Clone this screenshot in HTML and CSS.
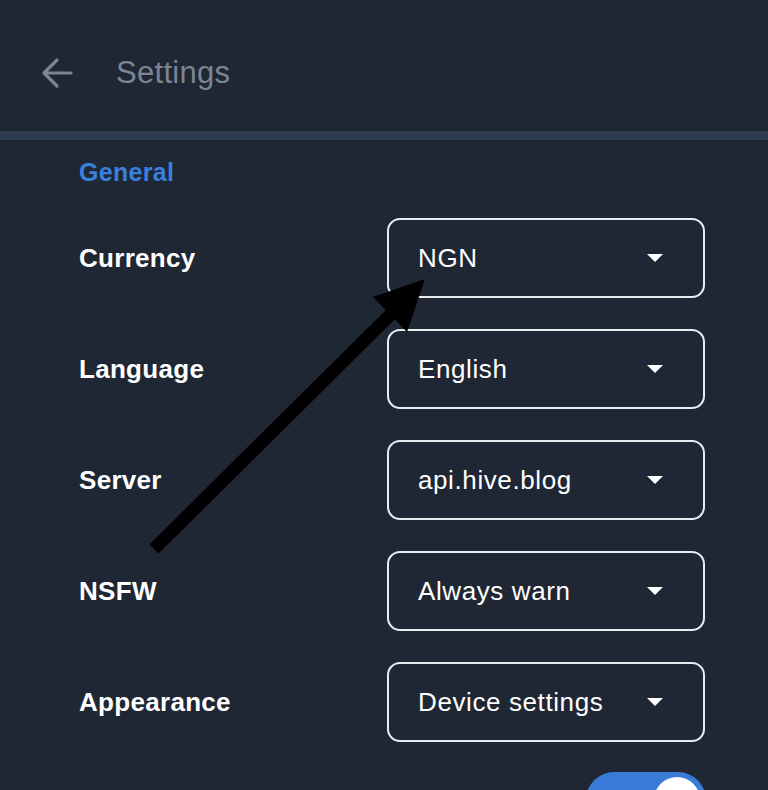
FILE: index.html
```html
<!DOCTYPE html>
<html lang="en">
<head>
    <meta charset="UTF-8">
    <meta name="viewport" content="width=device-width, initial-scale=1.0">
    <title>Settings</title>
    <link rel="stylesheet" href="styles.css">
</head>
<body>
    <header class="topbar">
        <svg class="back" width="34" height="34" viewBox="0 0 34 34">
            <path d="M31 17H4M17 4L4 17l13 13" fill="none" stroke="#7c8591" stroke-width="3.2" stroke-linecap="round" stroke-linejoin="round"/>
        </svg>
        <h1 class="title">Settings</h1>
    </header>
    <div class="divider"></div>

    <main class="content">
        <h2 class="section">General</h2>

        <div class="row">
            <span class="label">Currency</span>
            <div class="select"><span>NGN</span><i class="caret"></i></div>
        </div>
        <div class="row">
            <span class="label">Language</span>
            <div class="select"><span>English</span><i class="caret"></i></div>
        </div>
        <div class="row">
            <span class="label">Server</span>
            <div class="select"><span>api.hive.blog</span><i class="caret"></i></div>
        </div>
        <div class="row">
            <span class="label">NSFW</span>
            <div class="select"><span>Always warn</span><i class="caret"></i></div>
        </div>
        <div class="row">
            <span class="label">Appearance</span>
            <div class="select"><span>Device settings</span><i class="caret"></i></div>
        </div>
        <div class="row toggle-row">
            <span class="label"></span>
            <div class="toggle"><i class="knob"></i></div>
        </div>
    </main>

    <!-- annotation arrow drawn over the screenshot -->
    <svg class="pointer" width="768" height="790" viewBox="0 0 768 790">
        <line x1="154" y1="549" x2="392" y2="313" stroke="#000" stroke-width="13"/>
        <polygon points="425,279 373,297 407,332" fill="#000"/>
    </svg>
</body>
</html>
```

FILE: styles.css
```css
body {
    margin: 0;
    background: #1f2734;
    font-family: "Liberation Sans", Arial, sans-serif;
    color: #fff;
    height: 790px;
    overflow: hidden;
    position: relative;
}
.topbar {
    height: 131px;
    display: flex;
    align-items: center;
    padding-left: 40px;
    box-sizing: border-box;
}
.back {
    margin-top: 15px;
}
.title {
    margin: 15px 0 0 42px;
    font-size: 31px;
    letter-spacing: 0.3px;
    font-weight: normal;
    color: #7c8591;
}
.divider {
    height: 9px;
    background: #2f3c50;
}
.content {
    padding: 0 63px 0 79px;
}
.section {
    margin: 17px 0 0;
    height: 30px;
    line-height: 30px;
    font-size: 25px;
    letter-spacing: 0.3px;
    font-weight: bold;
    color: #3b7fdc;
}
.row {
    display: flex;
    justify-content: space-between;
    align-items: center;
    margin-top: 31px;
}
.label {
    font-size: 26px;
    letter-spacing: 0.3px;
    font-weight: bold;
}
.select {
    width: 318px;
    height: 80px;
    box-sizing: border-box;
    border: 2px solid #e9ecef;
    border-radius: 13px;
    display: flex;
    align-items: center;
    justify-content: space-between;
    padding: 0 40px 0 29px;
    font-size: 26px;
    letter-spacing: 0.6px;
}
.caret {
    width: 0;
    height: 0;
    border-left: 8px solid transparent;
    border-right: 8px solid transparent;
    border-top: 8px solid #fff;
}
.toggle-row {
    margin-top: 30px;
    margin-right: -1px;
}
.toggle {
    width: 120px;
    height: 56px;
    border-radius: 28px;
    background: #3a7bd8;
    position: relative;
}
.knob {
    position: absolute;
    top: 5px;
    right: 6px;
    width: 46px;
    height: 46px;
    border-radius: 50%;
    background: #fff;
}
.pointer {
    position: absolute;
    left: 0;
    top: 0;
}
```
